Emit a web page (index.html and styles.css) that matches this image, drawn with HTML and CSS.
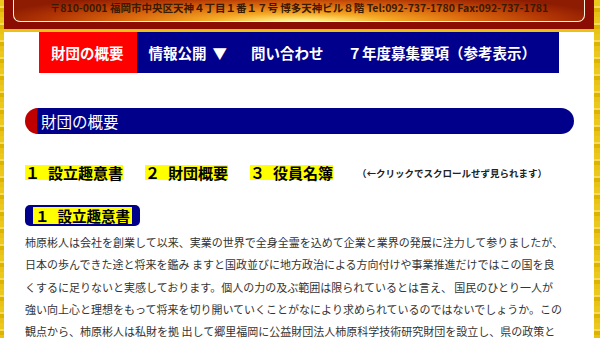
FILE: index.html
```html
<!DOCTYPE html>
<html lang="ja">
<head>
<meta charset="utf-8">
<title>財団の概要</title>
<link rel="stylesheet" href="styles.css">
</head>
<body>
<div class="page">
  <header class="header">
    <div class="glow">
      <p class="addr">〒810-0001 福岡市中央区天神４丁目１番１７号 博多天神ビル８階 Tel:092-737-1780 Fax:092-737-1781</p>
    </div>
  </header>
  <main class="main">
    <nav class="nav">
      <a class="nav-item active" href="#">財団の概要</a>
      <a class="nav-item" href="#">情報公開<span class="arrow">▼</span></a>
      <a class="nav-item" href="#">問い合わせ</a>
      <a class="nav-item" href="#">７年度募集要項（参考表示）</a>
    </nav>
    <h2 class="section-title">財団の概要</h2>
    <div class="links">
      <a class="link" href="#s1"><span class="num">１</span>設立趣意書</a>
      <a class="link" href="#s2"><span class="num">２</span>財団概要</a>
      <a class="link" href="#s3"><span class="num">３</span>役員名簿</a>
      <span class="note">（←クリックでスクロールせず見られます）</span>
    </div>
    <h3 class="sub" id="s1"><span class="sub-inner"><span class="num">１</span>設立趣意書</span></h3>
    <p class="text">柿原彬人は会社を創業して以来、実業の世界で全身全霊を込めて企業と業界の発展に注力して参りましたが、<br>日本の歩んできた途と将来を鑑み ますと国政並びに地方政治による方向付けや事業推進だけではこの国を良<br>くするに足りないと実感しております。個人の力の及ぶ範囲は限られているとは言え、 国民のひとり一人が<br>強い向上心と理想をもって将来を切り開いていくことがなにより求められているのではないでしょうか。この<br>観点から、柿原彬人は私財を拠 出して郷里福岡に公益財団法人柿原科学技術研究財団を設立し、県の政策と</p>
  </main>
</div>
</body>
</html>
```

FILE: styles.css
```css
html, body {
  margin: 0;
  padding: 0;
  height: 100%;
}
body {
  overflow: hidden;
  font-family: "Noto Sans CJK JP", "Noto Sans", sans-serif;
  background-color: #e6bf0e;
  background-image: repeating-linear-gradient(180deg, #ecc81c 0 6px, #f5dc58 6px 8px, #ddb200 8px 12px, #e8c214 12px 17px);
}
.page {
  margin-left: 4px;
  width: 590px;
}
.header {
  background: #8a0c02;
  height: 29px;
  padding: 0 9px;
  box-sizing: border-box;
}
.glow {
  height: 22px;
  box-sizing: border-box;
  border: 1.5px solid #fff4e0;
  border-top: none;
  border-radius: 0 0 7px 7px;
  overflow: hidden;
  background: radial-gradient(ellipse 55% 150% at 50% 108%, #fffdf0 0%, #ffe678 10%, #f4a824 30%, #d8640c 58%, #b03404 82%, #8e1c02 100%);
}
.addr {
  margin: 0;
  padding-top: 1px;
  font-size: 10.5px;
  line-height: 13px;
  font-weight: bold;
  color: #3a1a00;
  text-align: center;
  white-space: nowrap;
}
.main {
  background: #fff;
  margin-top: 3px;
  padding: 0 0 0 21px;
  height: 400px;
}
.nav {
  display: flex;
  margin-left: 14px;
  width: 520px;
  height: 41px;
  background: #00008c;
}
.nav-item {
  display: flex;
  align-items: center;
  padding: 0 12px;
  color: #fff;
  font-size: 14.5px;
  font-weight: bold;
  text-decoration: none;
  white-space: nowrap;
}
.nav-item.active {
  background: #ff0000;
  padding-right: 13px;
}
.arrow {
  margin-left: 6px;
}
.section-title {
  margin: 35px 0 0;
  width: 549px;
  height: 26px;
  box-sizing: border-box;
  background: #00008a;
  border-left: 12px solid #c00000;
  border-radius: 13px;
  padding-left: 4px;
  color: #fff;
  font-size: 15.5px;
  font-weight: normal;
  line-height: 26px;
}
.links {
  display: flex;
  align-items: center;
  gap: 22px;
  margin-top: 31px;
  height: 15px;
}
.link {
  display: block;
  height: 15px;
  line-height: 15px;
  background: #ffff00;
  color: #000;
  font-size: 15px;
  font-weight: bold;
  text-decoration: none;
  white-space: nowrap;
}
.num {
  margin-right: 8px;
}
.note {
  margin-left: 2px;
  font-size: 9.5px;
  font-weight: bold;
  color: #222;
  white-space: nowrap;
}
.sub {
  display: inline-block;
  margin: 25px 0 0;
  padding: 2px 8px;
  background: #00008a;
  border-radius: 5px;
}
.sub-inner {
  display: block;
  padding: 0 2px;
  background: #ffff00;
  color: #000;
  font-size: 14.5px;
  font-weight: bold;
  line-height: 17px;
  white-space: nowrap;
}
.text {
  margin: 4px 0 0;
  font-size: 11px;
  line-height: 22.3px;
  color: #333;
  white-space: nowrap;
}
```
